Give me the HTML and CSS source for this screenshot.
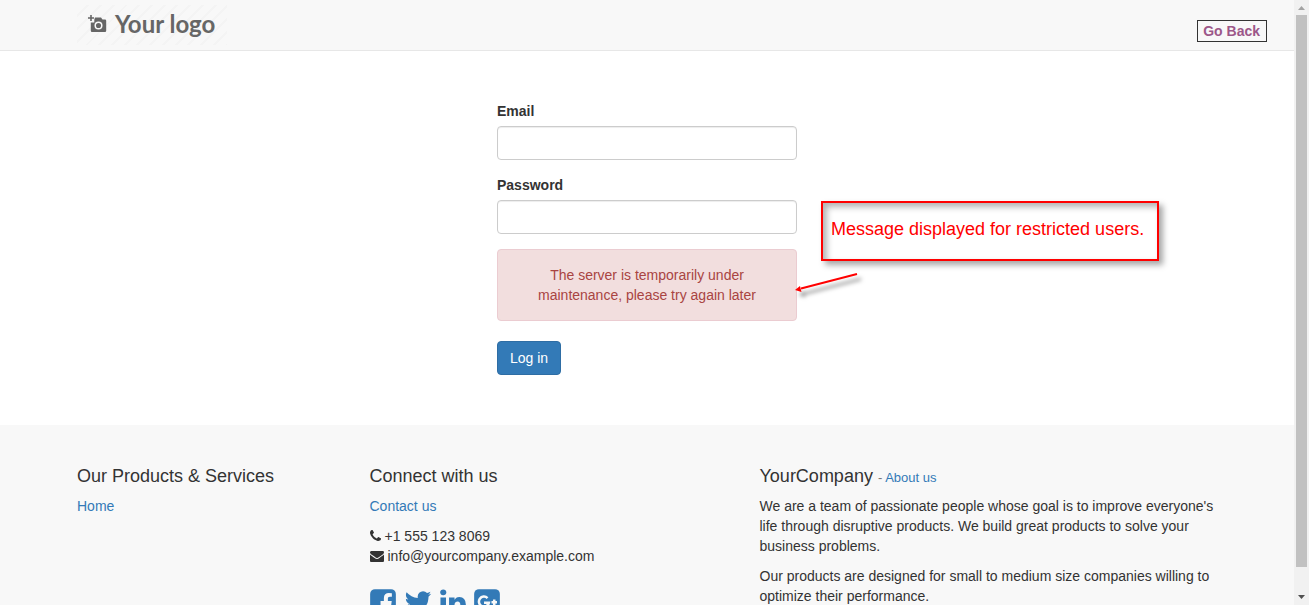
FILE: index.html
```html
<!DOCTYPE html>
<html lang="en">
<head>
<meta charset="utf-8">
<meta name="viewport" content="width=device-width, initial-scale=1">
<title>Log in</title>
<link rel="stylesheet" href="styles.css">
</head>
<body>
<div class="window">
  <div class="page">
    <header class="navbar">
      <div class="container">
        <a class="logo" href="#">
          <svg class="logo-icon" viewBox="0 0 19 18" aria-hidden="true">
            <path d="M3 0v6M0 3h6" stroke="#666" stroke-width="1.6" fill="none"/>
            <path fill="#666" d="M7 2.500h6l1.500 2H17q1.200 0 1.200 1.200v10q0 1.200-1.200 1.200H4q-1.200 0-1.200-1.200V7.500h3.500V4.500z"/>
            <circle cx="10.500" cy="10.500" r="3.300" fill="#666" stroke="#f8f8f8" stroke-width="1.500"/>
          </svg>
          <span>Your logo</span>
        </a>
      </div>
      <a class="go-back" href="#">Go Back</a>
    </header>

    <main class="content">
      <form class="login">
        <div class="field">
          <label for="email">Email</label>
          <input id="email" type="text">
        </div>
        <div class="field">
          <label for="password">Password</label>
          <input id="password" type="password">
        </div>
        <p class="alert" role="alert">The server is temporarily under maintenance, please try again later</p>
        <button class="button" type="submit">Log in</button>
        <div class="callout">Message displayed for restricted users.</div>
        <svg class="arrow" viewBox="0 0 70 36" aria-hidden="true">
          <path d="M62 3L6 17.500" stroke="#f00" stroke-width="2" fill="none"/>
          <path d="M0 19L5 15L6.500 21z" fill="#f00"/>
        </svg>
      </form>
    </main>

    <footer class="footer">
      <div class="columns">
        <section>
          <h4>Our Products &amp; Services</h4>
          <p><a href="#">Home</a></p>
        </section>
        <section>
          <h4>Connect with us</h4>
          <p><a href="#">Contact us</a></p>
          <ul class="contacts">
            <li><svg class="phone" viewBox="0 0 1408 1792" aria-hidden="true"><path d="M1408 1240q0 27-10 70.500t-21 68.500q-21 50-122 106-94 51-186 51-27 0-53-3.500t-57.500-12.500-47-14.500-55.500-20.500-49-18q-98-35-175-83-127-79-264-216t-216-264q-48-77-83-175-3-9-18-49t-20.500-55.500-14.500-47-12.500-57.500-3.500-53q0-92 51-186 56-101 106-122 25-11 68.500-21t70.500-10q14 0 21 3 18 6 53 76 11 19 30 54t35 63.500 31 53.500q3 4 17.500 25t21.500 35.500 7 28.500q0 20-28.500 50t-62 55-62 53-28.500 46q0 9 5 22.500t8.500 20.500 14 24 11.500 19q76 137 174 235t235 174q2 1 19 11.500t24 14 20.500 8.500 22.500 5q18 0 46-28.500t53-62 55-62 50-28.500q14 0 28.500 7t35.500 21.500 25 17.500q25 15 53.500 31t63.500 35 54 30q70 35 76 53 3 7 3 21z"/></svg><span>+1 555 123 8069</span></li>
            <li><svg class="envelope" viewBox="0 0 1792 1792" aria-hidden="true"><path d="M1792 710v794q0 66-47 113t-113 47h-1472q-66 0-113-47t-47-113v-794q44 49 101 87 362 246 497 345 57 42 92.500 65.500t94.500 48 110 24.500h2q51 0 110-24.500t94.500-48 92.500-65.500q170-123 498-345 57-39 100-87zm0-294q0 79-49 151t-122 123q-376 261-468 325-10 7-42.500 31t-54 38.500-52 32.500-57.500 27-50 9h-2q-23 0-50-9t-57.500-27-52-32.500-54-38.500-42.500-31q-91-64-262-182.500t-205-142.500q-62-42-117-115.500t-55-136.500q0-78 41.500-130t118.500-52h1472q65 0 112.500 47t47.500 113z"/></svg><span>info@yourcompany.example.com</span></li>
          </ul>
          <div class="social">
            <a href="#" aria-label="Facebook"><svg viewBox="0 0 1536 1792"><path d="M1248 128q119 0 203.500 84.500t84.500 203.500v960q0 119-84.500 203.500t-203.500 84.500h-188v-595h199l30-232h-229v-148q0-56 23.500-84t91.500-28l122-1v-207q-63-9-178-9-136 0-217.500 80t-81.500 226v171h-200v232h200v595h-532q-119 0-203.500-84.500t-84.500-203.500v-960q0-119 84.500-203.500t203.500-84.500h960z"/></svg></a>
            <a href="#" aria-label="Twitter"><svg class="wide" viewBox="0 0 1664 1792"><path d="M1620 408q-67 98-162 167 1 14 1 42 0 130-38 259.500t-115.500 248.500-184.500 210.500-258 146-323 54.500q-271 0-496-145 35 4 78 4 225 0 401-138-105-2-188-64.500t-114-159.500q33 5 61 5 43 0 85-11-112-23-185.500-111.500t-73.500-205.500v-4q68 38 146 41-66-44-105-115t-39-154q0-88 44-163 121 149 294.500 238.500t371.500 99.500q-8-38-8-74 0-134 94.500-228.500t228.500-94.500q140 0 236 102 109-21 205-78-37 115-142 178 93-10 186-50z"/></svg></a>
            <a href="#" aria-label="LinkedIn"><svg viewBox="0 0 1536 1792"><path d="M349 625v991h-330v-991h330zm21-306q1 73-50.500 122t-135.500 49h-2q-82 0-132-49t-50-122q0-74 51.500-122.500t134.500-48.500 133 48.500 51 122.500zm1166 729v568h-329v-530q0-105-40.500-164.500t-126.500-59.500q-63 0-105.500 34.500t-63.500 85.500q-11 30-11 81v553h-329q2-399 2-647t-1-296l-1-48h329v144h-2q20-32 41-56t56.500-52 87-43.500 114.500-15.500q171 0 275 113.500t104 332.500z"/></svg></a>
            <a href="#" aria-label="Google Plus"><svg viewBox="0 0 1536 1792"><rect y="128" width="1536" height="1536" rx="288"/><path class="cutout" d="M800 660A300 300 0 1 0 880 940H590M1200 740v330M1035 905h330"/></svg></a>
          </div>
        </section>
        <section>
          <h4>YourCompany <small>- <a href="#">About us</a></small></h4>
          <p>We are a team of passionate people whose goal is to improve everyone's life through disruptive products. We build great products to solve your business problems.</p>
          <p>Our products are designed for small to medium size companies willing to optimize their performance.</p>
        </section>
      </div>
    </footer>
  </div>

  <div class="scrollbar" aria-hidden="true">
    <svg viewBox="0 0 15 15"><path d="M4 10h7L7.500 6z" fill="#a3a3a3"/></svg>
    <div class="track"><div class="thumb"></div></div>
    <svg viewBox="0 0 15 15"><path d="M4 5h7L7.500 9z" fill="#505050"/></svg>
  </div>
</div>
</body>
</html>
```
FILE: styles.css
```css
* {
  box-sizing: border-box;
}

body {
  margin: 0;
  background: #fff;
  color: #333;
  font: 14px/20px "Liberation Sans", Arial, sans-serif;
}

a {
  color: #337ab7;
  text-decoration: none;
}

svg {
  display: block;
}

.window {
  display: flex;
  height: 100vh;
  overflow: hidden;
}

.page {
  flex: 1;
  min-width: 0;
}

.container {
  max-width: 1170px;
  margin: 0 auto;
  padding: 0 15px;
}

/* Header */
.navbar {
  position: relative;
  padding: 5px 0;
  background: #f8f8f8;
  border-bottom: 1px solid #e7e7e7;
}

.logo {
  display: flex;
  align-items: center;
  gap: 8px;
  width: 150px;
  height: 40px;
  padding: 0 0 2px 11px;
  background: repeating-linear-gradient(135deg, #f8f8f8 0 7px, #f4f4f4 7px 9px);
  color: #666;
  font: 700 24px/38px Lato, sans-serif;
  white-space: nowrap;
}

.logo-icon {
  width: 19px;
  height: 18px;
}

.go-back {
  position: absolute;
  top: 20px;
  right: 27px;
  padding: 0 6px 0 5px;
  border: 1px solid #333;
  color: #9c5789;
  font-weight: bold;
}

/* Login form */
.content {
  padding: 50px 0;
}

.login {
  position: relative;
  width: 300px;
  margin: 0 auto;
}

.field {
  margin-bottom: 15px;
}

.field label {
  display: block;
  margin-bottom: 5px;
  font-weight: bold;
}

.field input {
  display: block;
  width: 100%;
  height: 34px;
  padding: 6px 12px;
  border: 1px solid #ccc;
  border-radius: 4px;
  background: #fff;
  box-shadow: inset 0 1px 1px rgba(0, 0, 0, 0.075);
  font: inherit;
}

.alert {
  margin: 0 0 20px;
  padding: 15px;
  border: 1px solid #ebccd1;
  border-radius: 4px;
  background: #f2dede;
  color: #a94442;
  text-align: center;
}

.button {
  display: block;
  padding: 6px 12px;
  border: 1px solid #2e6da4;
  border-radius: 4px;
  background: #337ab7;
  color: #fff;
  font: inherit;
}

/* Annotation over the form */
.callout {
  position: absolute;
  top: 100px;
  left: 324px;
  padding: 16px 13px 20px 8px;
  border: 2px solid #f00;
  box-shadow: 4px 4px 6px rgba(0, 0, 0, 0.35), inset 4px 4px 6px rgba(0, 0, 0, 0.3);
  color: #f00;
  font-size: 18px;
  white-space: nowrap;
}

.arrow {
  position: absolute;
  top: 170px;
  left: 298px;
  width: 70px;
  height: 36px;
  overflow: visible;
  filter: drop-shadow(4px 5px 2px rgba(0, 0, 0, 0.5));
}

/* Footer */
.footer {
  padding: 40px 0;
  background: #f8f8f8;
}

.columns {
  display: grid;
  grid-template-columns: 3fr 4fr 5fr;
  max-width: 1170px;
  margin: 0 auto;
}

.columns section {
  padding: 0 15px;
}

.footer h4 {
  height: 20px;
  margin: 0 0 11px;
  font-size: 18px;
  font-weight: normal;
  line-height: 22px;
}

.footer small {
  color: #777;
  font-size: 13px;
  line-height: 1;
}

.footer p {
  margin: 0 0 10px;
}

.contacts {
  margin: 0 0 21px;
  padding: 0;
  list-style: none;
}

.contacts li {
  display: flex;
  align-items: center;
  gap: 4px;
}

.contacts svg {
  height: 14px;
  fill: #333;
}

.phone {
  width: 11px;
}

.envelope {
  width: 14px;
}

.social {
  display: flex;
  gap: 8px;
}

.social svg {
  width: 26px;
  height: 30px;
  fill: #337ab7;
}

.social .wide {
  width: 28px;
}

.social .cutout {
  fill: none;
  stroke: #f8f8f8;
  stroke-width: 150;
}

/* Scrollbar */
.scrollbar {
  display: flex;
  flex-direction: column;
  width: 15px;
  background: #f1f1f1;
}

.track {
  flex: 1;
  padding: 0 2px;
}

.thumb {
  height: 96%;
  background: #c1c1c1;
}
```
